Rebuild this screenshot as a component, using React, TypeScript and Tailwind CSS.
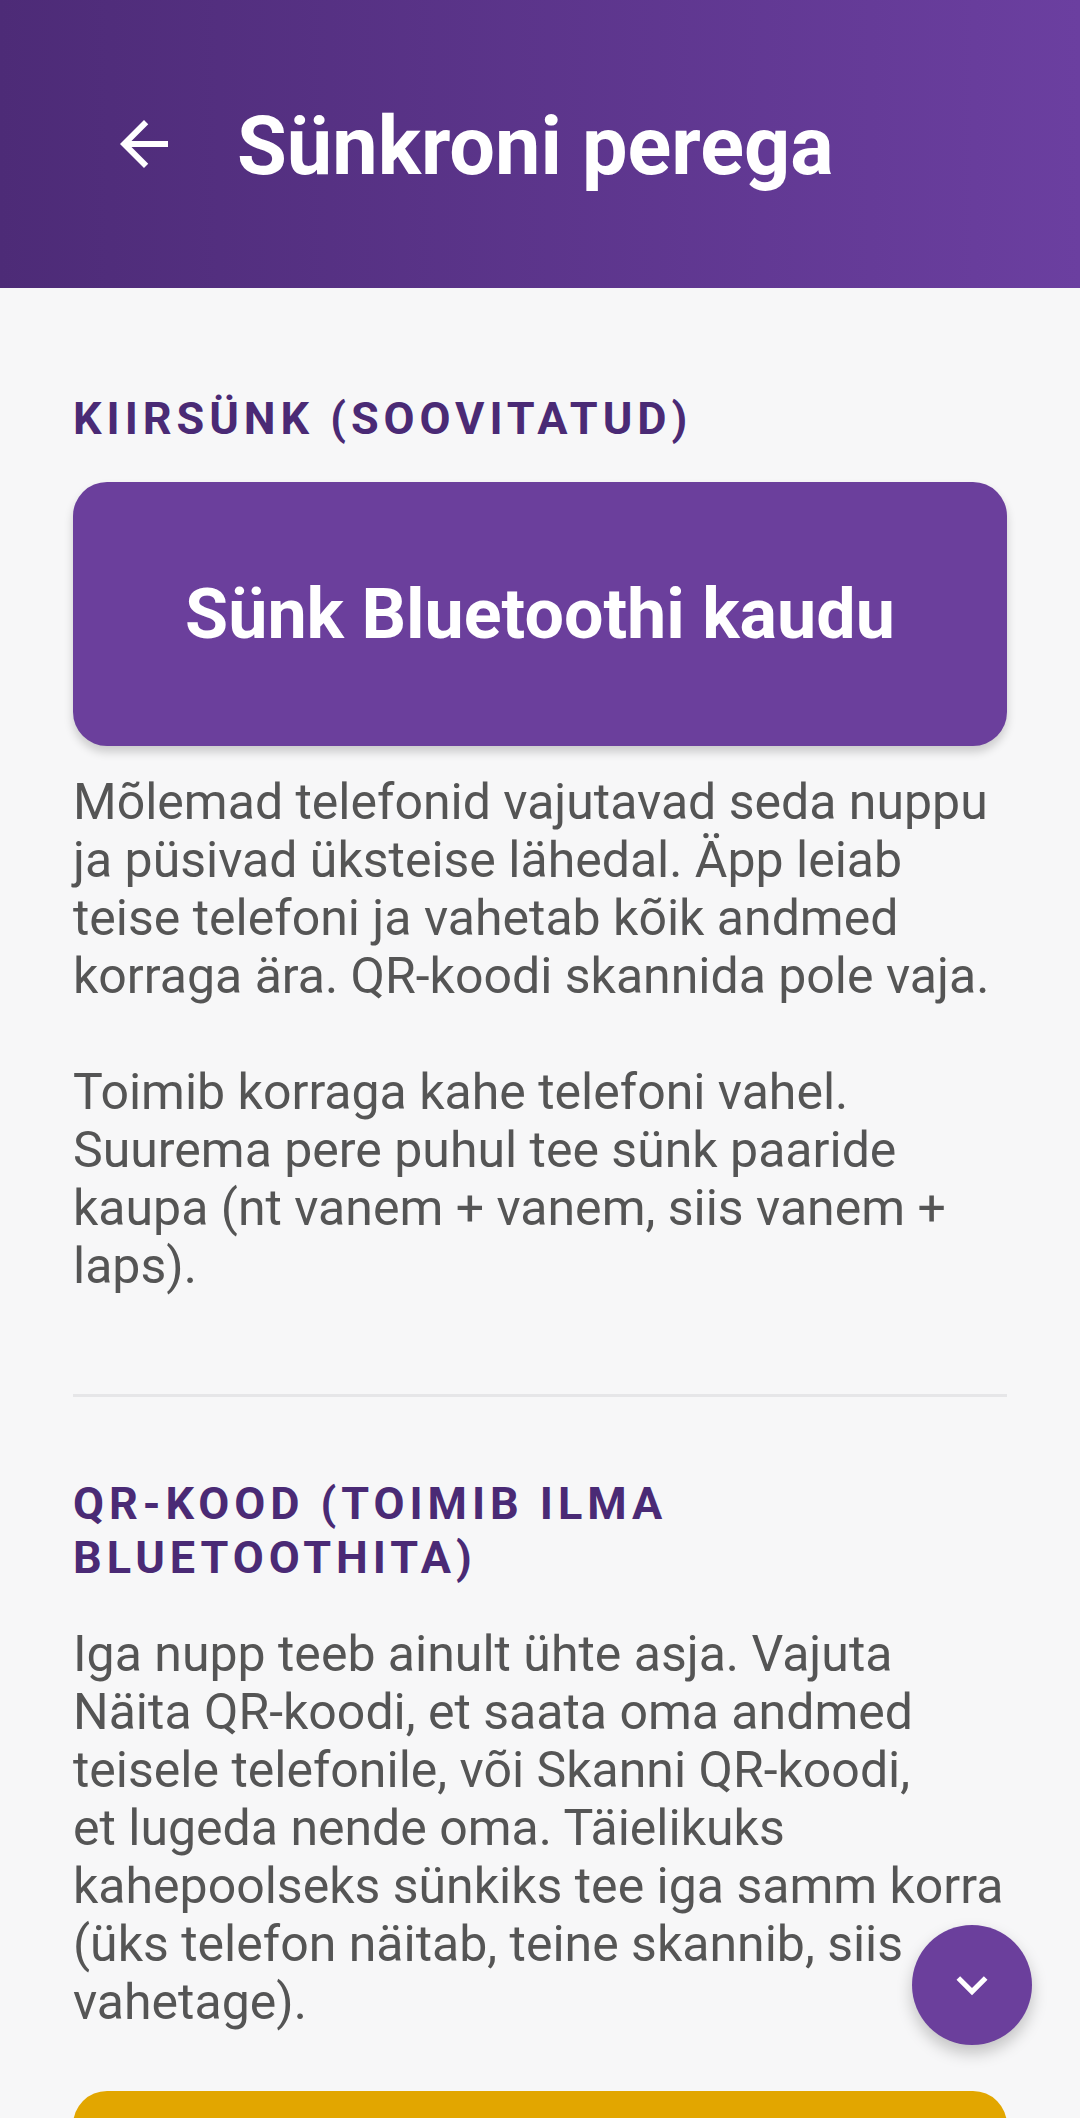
import { useState } from 'react'

function BackIcon() {
  return (
    <svg viewBox="0 0 24 24" className="h-[72px] w-[72px] fill-white">
      <path d="M20 11H7.83l5.59-5.59L12 4l-8 8 8 8 1.41-1.41L7.83 13H20v-2z" />
    </svg>
  )
}

function ChevronDown() {
  return (
    <svg viewBox="0 0 24 24" className="h-[62px] w-[62px] fill-white">
      <path d="M16.59 8.59L12 13.17 7.41 8.59 6 10l6 6 6-6z" />
    </svg>
  )
}

function SectionLabel({ children }: { children: React.ReactNode }) {
  return (
    <h2 className="text-[45px] font-bold uppercase leading-[54px] tracking-[0.11em] text-[#4a2a75]">
      {children}
    </h2>
  )
}

export default function App() {
  const [synced, setSynced] = useState(false)

  return (
    <div className="min-h-screen bg-[#f7f7f8]" style={{ fontFamily: 'Roboto, "Noto Sans", sans-serif' }}>
      <header className="flex h-[288px] items-center bg-gradient-to-r from-[#4d2b77] to-[#6b3fa0] pl-[108px]">
        <button className="flex h-[72px] w-[72px] items-center justify-center">
          <BackIcon />
        </button>
        <h1 className="ml-[57px] mt-[6px] text-[81px] font-bold leading-[96px] text-white">Sünkroni perega</h1>
      </header>

      <main className="px-[73px] pb-[300px]">
        <section className="pt-[104px] pb-[99px]">
          <SectionLabel>Kiirsünk (soovitatud)</SectionLabel>
          <button
            onClick={() => setSynced(!synced)}
            className="mt-[36px] flex h-[264px] w-full items-center justify-center rounded-[34px] bg-[#6b3f9c] text-[70px] font-bold text-white shadow-[0_6px_10px_rgba(0,0,0,0.18)]"
          >
            Sünk Bluetoothi kaudu
          </button>
          <div className="mt-[27px] text-[50px] leading-[58px] text-[#555555]">
            <p>
              Mõlemad telefonid vajutavad seda nuppu ja püsivad üksteise lähedal. Äpp leiab teise telefoni ja vahetab kõik
              andmed korraga ära. QR-koodi skannida pole vaja.
            </p>
            <p className="mt-[58px]">
              Toimib korraga kahe telefoni vahel. Suurema pere puhul tee sünk paaride kaupa (nt vanem + vanem, siis vanem +
              laps).
            </p>
          </div>
        </section>

        <hr className="h-[3px] border-0 bg-[#e6e6e8]" />

        <section className="pt-[80px]">
          <SectionLabel>QR-kood (toimib ilma Bluetoothita)</SectionLabel>
          <p className="mt-[40px] text-[50px] leading-[58px] text-[#555555]">
            Iga nupp teeb ainult ühte asja. Vajuta Näita QR-koodi, et saata oma andmed teisele telefonile, või Skanni
            QR-koodi,
            <br />
            et lugeda nende oma. Täielikuks kahepoolseks sünkiks tee iga samm korra (üks telefon näitab, teine skannib,
            siis vahetage).
          </p>
          <button className="mt-[60px] flex h-[264px] w-full items-center justify-center rounded-[34px] bg-[#e2a600] text-[70px] font-bold text-white">
            Näita QR-koodi
          </button>
          <button className="mt-[36px] flex h-[264px] w-full items-center justify-center rounded-[34px] bg-[#6b3f9c] text-[70px] font-bold text-white">
            Skanni QR-koodi
          </button>
        </section>
      </main>

      <button className="fixed bottom-[73px] right-[48px] flex h-[120px] w-[120px] items-center justify-center rounded-full bg-[#6b3f9c] shadow-[0_8px_16px_rgba(0,0,0,0.22)]">
        <ChevronDown />
      </button>
    </div>
  )
}
